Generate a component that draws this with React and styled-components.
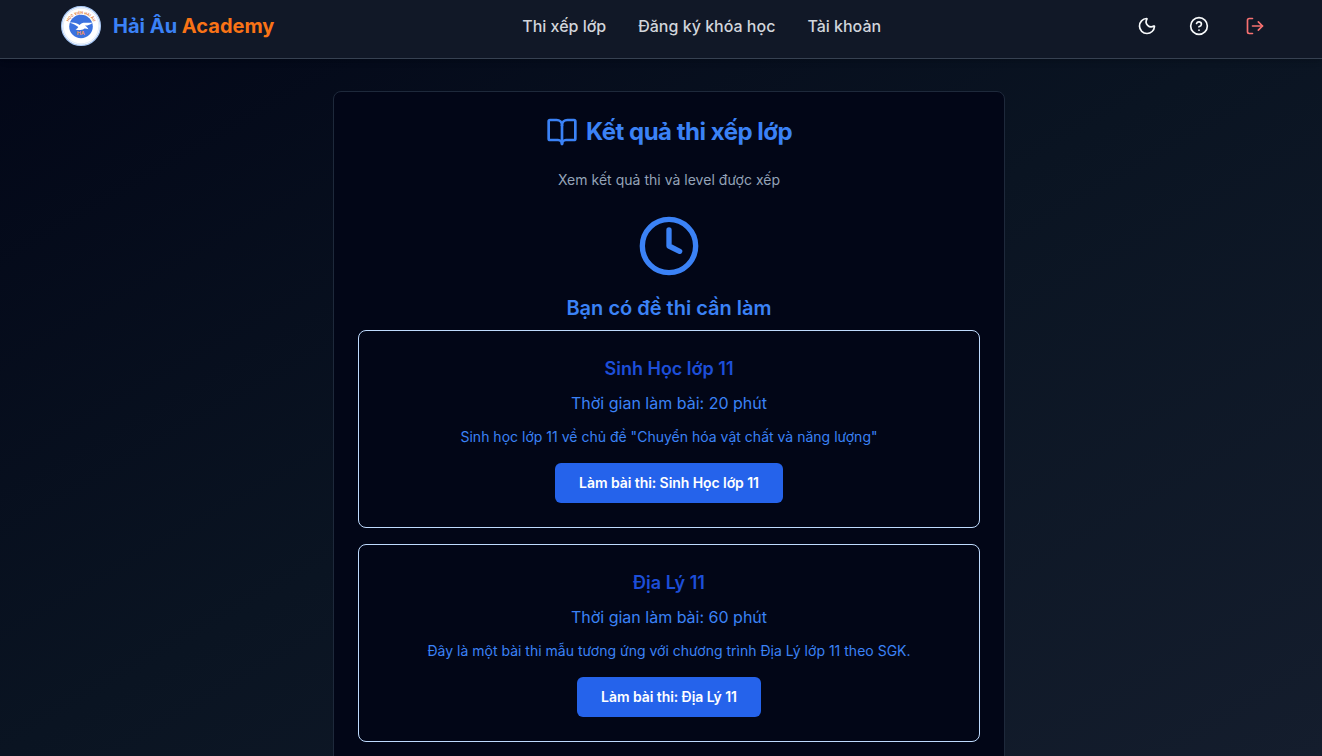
import React from "react";
import styled, { createGlobalStyle } from "styled-components";
import { BookOpen, CircleHelp, Clock, LogOut, Moon } from "lucide-react";

const GlobalStyle = createGlobalStyle`
  *, *::before, *::after { box-sizing: border-box; }
  body {
    margin: 0;
    overflow: hidden;
    font-family: Inter, "Noto Sans", sans-serif;
    font-size: 16px;
    line-height: 24px;
    background: #020617;
  }
  h1, h2, h3, p { margin: 0; }
`;

const Page = styled.div`
  display: flex;
  flex-direction: column;
  height: 100vh;
  overflow: hidden;
  background: linear-gradient(to bottom right, #020617, #0a1422 50%, #141d2d);
`;

const Header = styled.header`
  display: flex;
  flex: none;
  align-items: center;
  justify-content: space-between;
  height: 59px;
  padding: 0 45px 6px 61px;
  background: #111827;
  border-bottom: 1px solid #374151;
  box-shadow: 0 4px 6px -1px rgba(0, 0, 0, 0.1), 0 2px 4px -2px rgba(0, 0, 0, 0.1);
`;

const Brand = styled.a`
  display: flex;
  align-items: center;
  gap: 12px;
  color: #3b82f6;
  font-size: 20px;
  font-weight: 700;
  line-height: 28px;
  white-space: nowrap;
`;

const BrandAccent = styled.span`
  color: #f97316;
`;

const LogoMark = styled.svg`
  display: block;
  width: 40px;
  height: 40px;
`;

const Nav = styled.nav`
  display: flex;
  gap: 32px;
`;

const NavLink = styled.a`
  color: #d1d5db;
  font-weight: 500;
  white-space: nowrap;
`;

const Actions = styled.div`
  display: flex;
  align-items: center;
  gap: 16px;
`;

const IconButton = styled.button`
  display: flex;
  align-items: center;
  justify-content: center;
  width: ${(p) => (p.$wide ? 44 : 36)}px;
  height: 36px;
  padding: 0;
  border: 0;
  background: transparent;
  color: ${(p) => (p.$danger ? "#f87171" : "#f8fafc")};
`;

const Main = styled.main`
  display: flex;
  flex: 1;
  justify-content: center;
  min-height: 0;
  padding: 32px 0 0 16px;
`;

const Panel = styled.section`
  display: flex;
  flex: none;
  flex-direction: column;
  align-items: center;
  width: 672px;
  height: 760px;
  padding: 24px;
  border: 1px solid #1e293b;
  border-radius: 8px;
  background: #020617;
  color: #3b82f6;
  text-align: center;
`;

const PanelTitle = styled.h1`
  display: flex;
  align-items: center;
  gap: 8px;
  height: 32px;
  font-size: 24px;
  font-weight: 700;
  line-height: 24px;
  letter-spacing: -0.5px;
`;

const PanelSubtitle = styled.p`
  margin: 22px 0 24px;
  color: #94a3b8;
  font-size: 14px;
  line-height: 20px;
  letter-spacing: 0.02px;
`;

const SectionTitle = styled.h2`
  margin: 16px 0 8px;
  font-size: 20px;
  font-weight: 600;
  line-height: 28px;
`;

const ExamList = styled.div`
  display: flex;
  flex-direction: column;
  align-self: stretch;
  gap: 16px;
`;

const ExamCard = styled.article`
  display: flex;
  flex-direction: column;
  align-items: center;
  padding: 24px;
  border: 1px solid #bfdbfe;
  border-radius: 8px;
`;

const ExamTitle = styled.h3`
  margin-bottom: 8px;
  color: #1d4ed8;
  font-size: 18px;
  font-weight: 600;
  line-height: 28px;
`;

const ExamDuration = styled.p`
  margin-bottom: 12px;
`;

const ExamDescription = styled.p`
  margin-bottom: 16px;
  font-size: 14px;
  line-height: 20px;
  letter-spacing: 0.01px;
`;

const StartButton = styled.button`
  height: 40px;
  padding: 0 24px;
  border: 0;
  border-radius: 6px;
  background: #2563eb;
  color: #fff;
  font: 600 14px/20px Inter, "Noto Sans", sans-serif;
  letter-spacing: -0.07px;
  white-space: nowrap;
`;

const exams = [
  {
    name: "Sinh Học lớp 11",
    minutes: 20,
    description: 'Sinh học lớp 11 về chủ đề "Chuyển hóa vật chất và năng lượng"',
  },
  {
    name: "Địa Lý 11",
    minutes: 60,
    description: "Đây là một bài thi mẫu tương ứng với chương trình Địa Lý lớp 11 theo SGK.",
  },
];

function Logo() {
  return (
    <LogoMark viewBox="0 0 40 40">
      <defs>
        <path id="logo-arc" d="M6.6 20.5a13.4 12.6 0 0 1 26.8 0" />
      </defs>
      <circle cx="20" cy="20" r="19.4" fill="#fff" stroke="#a9c8f5" strokeWidth="1.2" />
      <circle cx="20" cy="20" r="17.8" fill="none" stroke="#c3d6f3" strokeWidth="0.5" />
      <circle cx="20" cy="20.5" r="11.8" fill="#3b72df" />
      <text fill="#e07c3c" fontSize="3.6" fontWeight="700">
        <textPath href="#logo-arc" startOffset="50%" textAnchor="middle">HỌC VIỆN HẢI ÂU</textPath>
      </text>
      <path
        d="M8.3 16.6c4-.6 7.8.1 10.3 2.4 1.4-1.7 3.3-2.3 6.2-2.2 3 .1 5 0 7-.3-2.2 2.2-4.6 3-7.9 3.1 1.4.9 2.6 2 3.5 3.6-1.7-.5-3.2-.7-4.3-.5-2.5 1.7-5.8 1.8-8.6.7 1.3-.4 2.2-1.3 2.8-2.3-2.4-1.7-5-3.2-9-4.5Z"
        fill="#fff"
      />
      <text x="19.8" y="29.4" textAnchor="middle" fill="#f0935c" fontSize="5.4" fontWeight="700">HA</text>
    </LogoMark>
  );
}

export default function App() {
  return (
    <>
      <GlobalStyle />
      <Page>
        <Header>
          <Brand>
            <Logo />
            <span>Hải Âu <BrandAccent>Academy</BrandAccent></span>
          </Brand>
          <Nav>
            <NavLink>Thi xếp lớp</NavLink>
            <NavLink>Đăng ký khóa học</NavLink>
            <NavLink>Tài khoản</NavLink>
          </Nav>
          <Actions>
            <IconButton aria-label="Giao diện"><Moon size={20} /></IconButton>
            <IconButton aria-label="Trợ giúp"><CircleHelp size={20} /></IconButton>
            <IconButton aria-label="Đăng xuất" $wide $danger><LogOut size={20} /></IconButton>
          </Actions>
        </Header>
        <Main>
          <Panel>
            <PanelTitle><BookOpen size={32} />Kết quả thi xếp lớp</PanelTitle>
            <PanelSubtitle>Xem kết quả thi và level được xếp</PanelSubtitle>
            <Clock size={64} />
            <SectionTitle>Bạn có đề thi cần làm</SectionTitle>
            <ExamList>
              {exams.map((exam) => (
                <ExamCard key={exam.name}>
                  <ExamTitle>{exam.name}</ExamTitle>
                  <ExamDuration>Thời gian làm bài: {exam.minutes} phút</ExamDuration>
                  <ExamDescription>{exam.description}</ExamDescription>
                  <StartButton>Làm bài thi: {exam.name}</StartButton>
                </ExamCard>
              ))}
            </ExamList>
          </Panel>
        </Main>
      </Page>
    </>
  );
}
